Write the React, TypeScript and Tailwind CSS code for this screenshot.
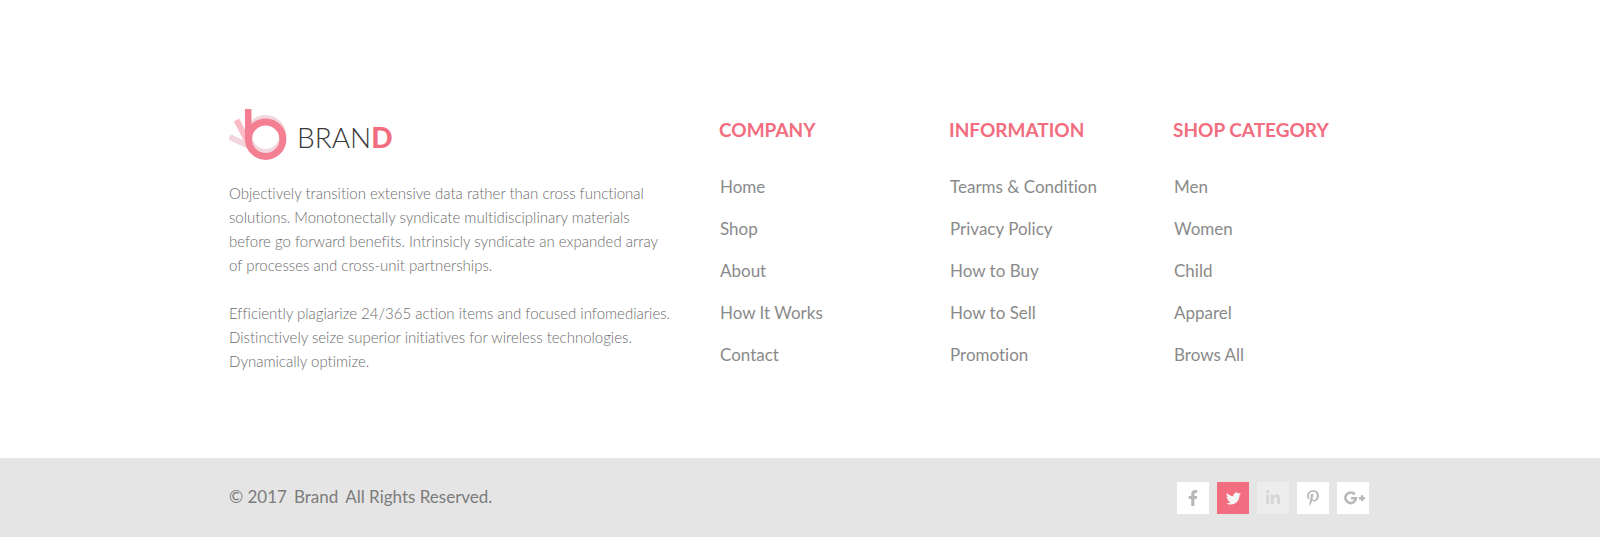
import { FaFacebookF, FaTwitter, FaLinkedinIn, FaPinterestP } from "react-icons/fa";
import type { ReactNode } from "react";

const columns = [
  { title: "COMPANY", links: ["Home", "Shop", "About", "How It Works", "Contact"] },
  {
    title: "INFORMATION",
    links: ["Tearms & Condition", "Privacy Policy", "How to Buy", "How to Sell", "Promotion"],
  },
  { title: "SHOP CATEGORY", links: ["Men", "Women", "Child", "Apparel", "Brows All"] },
];

function GooglePlus() {
  return (
    <svg viewBox="0 0 22 14" className="ml-1 h-[14px] w-[22px]" aria-hidden="true">
      <path
        d="M10.800 3.400A5.300 5.300 0 1 0 12 7.200H7"
        fill="none"
        stroke="currentColor"
        strokeWidth="2.600"
      />
      <path d="M16.800 4.300h2.400v1.700h1.800v2.400h-1.800v1.700h-2.400V8.400H15V6h1.800z" fill="currentColor" />
    </svg>
  );
}

const socials: { name: string; tile: string; icon: ReactNode }[] = [
  { name: "Facebook", tile: "bg-white text-[#b8b8b8]", icon: <FaFacebookF size={16} /> },
  { name: "Twitter", tile: "bg-[#f26d80] text-[#f5f5f5]", icon: <FaTwitter size={15} /> },
  { name: "LinkedIn", tile: "bg-[#ededed] text-[#d6d6d6]", icon: <FaLinkedinIn size={16} /> },
  { name: "Pinterest", tile: "bg-white text-[#b8b8b8]", icon: <FaPinterestP size={16} /> },
  { name: "Google Plus", tile: "bg-white text-[#b8b8b8]", icon: <GooglePlus /> },
];

function Logo() {
  return (
    <a href="#home" className="flex items-center gap-2.5" aria-label="Brand">
      <svg viewBox="0 0 58 52" className="h-[52px] w-[58px]" aria-hidden="true">
        <circle cx="36.700" cy="26.500" r="17" fill="none" stroke="#f1d7dd" strokeWidth="7" />
        <path d="M0.500 28L19 36.500" stroke="#f1d7dd" strokeWidth="6" />
        <path d="M7.500 11L19 33" stroke="#fbbbc6" strokeWidth="6" />
        <path d="M19.200 0V30" stroke="#f47f92" strokeWidth="6.500" />
        <circle cx="36.700" cy="30.200" r="17.200" fill="none" stroke="#f47f92" strokeWidth="7" />
      </svg>
      <span className="pt-1 text-[28px] leading-9 font-light text-[#3a3a3a]">
        BRAN<span className="font-black text-[#f26d80]">D</span>
      </span>
    </a>
  );
}

export default function App() {
  return (
    <footer className="bg-white font-['Lato',sans-serif] [font-variant-ligatures:none]">
      <div className="mx-auto grid max-w-[1142px] grid-cols-[490fr_230fr_224fr_198fr] pt-[109px] pb-[85px]">
        <section>
          <Logo />
          <div className="mt-5 space-y-6 text-[15px] leading-6 font-light text-[#6c6c6c]">
            <p>
              Objectively transition extensive data rather than cross functional
              <br />
              solutions. Monotonectally syndicate multidisciplinary materials
              <br />
              before go forward benefits. Intrinsicly syndicate an expanded array
              <br />
              of processes and cross-unit partnerships.
            </p>
            <p>
              Efficiently plagiarize 24/365 action items and focused infomediaries.
              <br />
              Distinctively seize superior initiatives for wireless technologies.
              <br />
              Dynamically optimize.
            </p>
          </div>
        </section>
        {columns.map((column) => (
          <nav key={column.title} aria-label={column.title} className="pt-[9px]">
            <h2 className="text-[19px] leading-6 font-bold text-[#f26d80]">{column.title}</h2>
            <ul className="mt-[33px] space-y-[18px] pl-px text-[17px] leading-6 text-[#8a8a8a]">
              {column.links.map((link) => (
                <li key={link}>
                  <a href="#link">{link}</a>
                </li>
              ))}
            </ul>
          </nav>
        ))}
      </div>
      <div className="bg-[#e5e5e5]">
        <div className="mx-auto flex max-w-[1142px] items-start justify-between pt-6 pr-0.5 pb-[23px]">
          <p className="flex gap-[7px] pt-[3px] text-[17px] leading-6 text-[#7c7c7c]">
            <span>© 2017</span>
            <span>Brand</span>
            <span>All Rights Reserved.</span>
          </p>
          <ul className="flex gap-2">
            {socials.map((social) => (
              <li key={social.name}>
                <a
                  href="#social"
                  aria-label={social.name}
                  className={`flex size-8 items-center justify-center ${social.tile}`}
                >
                  {social.icon}
                </a>
              </li>
            ))}
          </ul>
        </div>
      </div>
    </footer>
  );
}
